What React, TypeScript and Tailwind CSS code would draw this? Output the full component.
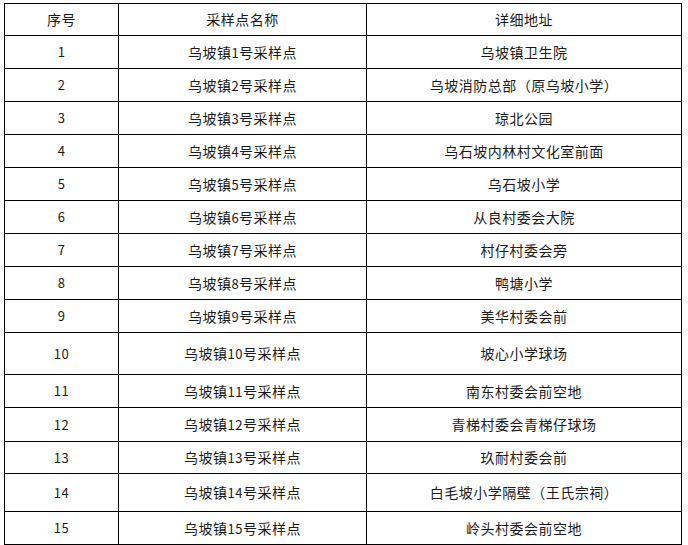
const rows: { no: number; name: string; addr: string; h: string }[] = [
  { no: 1, name: "1", addr: "乌坡镇卫生院", h: "h-[33px]" },
  { no: 2, name: "2", addr: "乌坡消防总部（原乌坡小学）", h: "h-[33px]" },
  { no: 3, name: "3", addr: "琼北公园", h: "h-[33px]" },
  { no: 4, name: "4", addr: "乌石坡内林村文化室前面", h: "h-[33px]" },
  { no: 5, name: "5", addr: "乌石坡小学", h: "h-[33px]" },
  { no: 6, name: "6", addr: "从良村委会大院", h: "h-[33px]" },
  { no: 7, name: "7", addr: "村仔村委会旁", h: "h-[33px]" },
  { no: 8, name: "8", addr: "鸭塘小学", h: "h-[33px]" },
  { no: 9, name: "9", addr: "美华村委会前", h: "h-[33px]" },
  { no: 10, name: "10", addr: "坡心小学球场", h: "h-[42px]" },
  { no: 11, name: "11", addr: "南东村委会前空地", h: "h-[33px]" },
  { no: 12, name: "12", addr: "青梯村委会青梯仔球场", h: "h-[34px]" },
  { no: 13, name: "13", addr: "玖耐村委会前", h: "h-[32px]" },
  { no: 14, name: "14", addr: "白毛坡小学隔壁（王氏宗祠）", h: "h-[38px]" },
  { no: 15, name: "15", addr: "岭头村委会前空地", h: "h-[33px]" },
];

export default function App() {
  return (
    <div className="w-[688px] h-[545px] bg-white pl-[4px] pt-[3px] font-['Noto_Sans_CJK_SC','Noto_Sans',sans-serif] text-[14px] text-[#1a1a1a] tracking-[0.5px]">
      <table className="w-[677px] border-collapse table-fixed">
        <colgroup>
          <col className="w-[114px]" />
          <col className="w-[248px]" />
          <col className="w-[315px]" />
        </colgroup>
        <thead>
          <tr className="h-[32px]">
            <th className="border border-black font-normal text-center p-0">序号</th>
            <th className="border border-black font-normal text-center p-0">采样点名称</th>
            <th className="border border-black font-normal text-center p-0">详细地址</th>
          </tr>
        </thead>
        <tbody>
          {rows.map((r) => (
            <tr key={r.no} className={r.h}>
              <td className="border border-black text-center p-0 text-[13px]">{r.no}</td>
              <td className="border border-black text-center p-0">
                乌坡镇<span className="text-[13px]">{r.name}</span>号采样点
              </td>
              <td className="border border-black text-center p-0">{r.addr}</td>
            </tr>
          ))}
        </tbody>
      </table>
    </div>
  );
}
